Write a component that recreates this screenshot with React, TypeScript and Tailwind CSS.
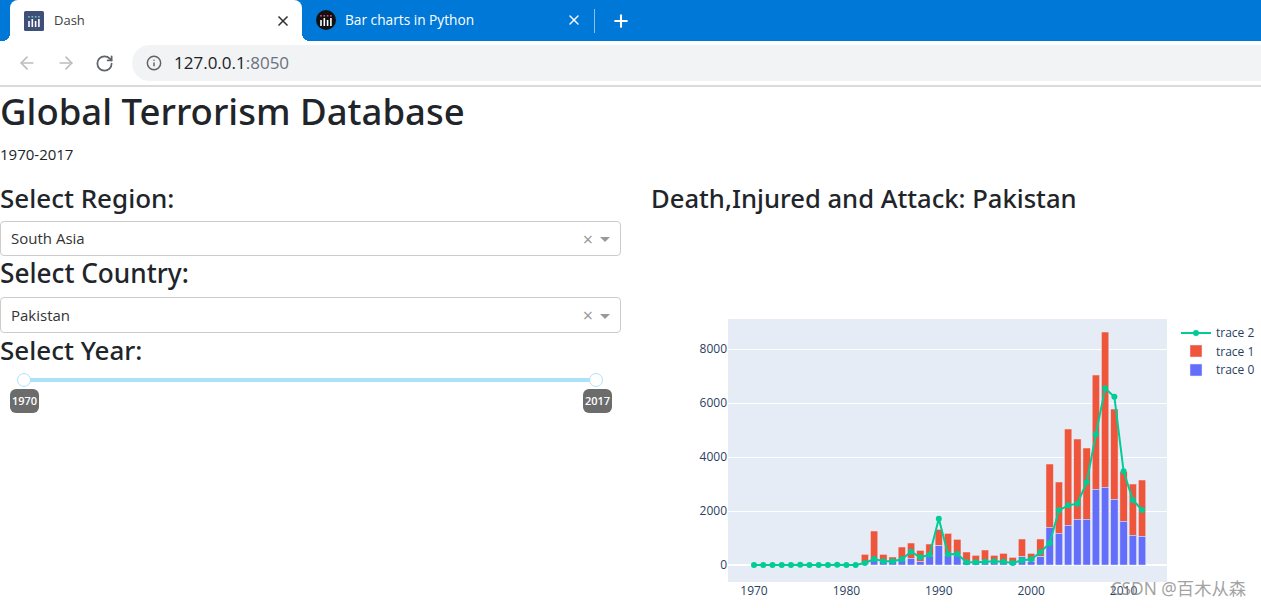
import { ArrowLeft, ArrowRight, Info, Plus, RotateCw, X } from "lucide-react";

const font = "font-['Open_Sans',sans-serif]";
const heading = "font-['Noto_Sans',sans-serif] font-medium";

// values read off the chart, in zoomed pixels (y = v / 3 + 320), starting at 1982
const totals = [703, 633, 703, 711, 681, 669, 691, 672, 628, 640, 658, 696, 706, 690, 706, 700, 712, 657, 700, 657, 432, 486, 327, 357, 384, 165, 36, 267, 455, 492, 480];
const blues = [733, 722, 725, 725, 720, 715, 724, 708, 677, 705, 705, 725, 725, 722, 725, 725, 727, 710, 724, 710, 622, 640, 616, 598, 598, 508, 502, 538, 604, 646, 649];
const line = [735, 735, 735, 735, 735, 734, 735, 735, 735, 734, 735, 735, 729, 717, 724, 724, 718, 695, 712, 704, 596, 703, 702, 727, 727, 725, 724, 725, 729, 721, 718, 697, 669, 571, 556, 551, 487, 343, 205, 230, 454, 540, 570];

const xOf = (year: number) => 754 + 9.24 * (year - 1970);
const yOf = (v: number) => v / 3 + 320;

function DashIcon({ round }: { round?: boolean }) {
  return (
    <svg width="20" height="20" viewBox="0 0 20 20" className="shrink-0">
      {round ? <circle cx="10" cy="10" r="10" fill="#111" /> : <rect width="20" height="20" rx="1.5" fill="#3f5078" />}
      {[5, 8.3, 11.6, 14.9].map((x, i) => (
        <g key={x}>
          <rect x={x - 0.8} y="5" width="1.6" height="1.6" fill={round ? "#e0457b" : "#6fc3b8"} />
          <rect x={x - 0.8} y={i % 2 ? 8 : 10} width="1.6" height={i % 2 ? 8 : 6} fill="#fff" />
        </g>
      ))}
    </svg>
  );
}

function Dropdown({ value, height }: { value: string; height: string }) {
  return (
    <div className={`flex items-center rounded border border-[#ccc] pl-[10px] pr-[10px] text-[#333] ${height}`}>
      <span className="flex-1 text-[15px]">{value}</span>
      <span className="mr-[7px] text-[18px] leading-none text-[#999]">×</span>
      <span className="mt-[2px] h-0 w-0 border-x-[5px] border-t-[5px] border-x-transparent border-t-[#999]" />
    </div>
  );
}

function Chart() {
  return (
    <svg width="610" height="383" viewBox="651 225 610 383" className={font} fontSize="12" fill="#2a3f5f">
      <rect x="728" y="319" width="439" height="263" fill="#e5ecf6" />
      {[349, 403, 457, 511].map((y) => (
        <line key={y} x1="728" x2="1167" y1={y + 0.5} y2={y + 0.5} stroke="#fff" />
      ))}
      <line x1="728" x2="1167" y1="565" y2="565" stroke="#fff" strokeWidth="2" />
      {[8000, 6000, 4000, 2000, 0].map((v) => (
        <text key={v} x="727" y={565 - v * 0.027 + 4} textAnchor="end">{v}</text>
      ))}
      {[1970, 1980, 1990, 2000, 2010].map((yr) => (
        <text key={yr} x={xOf(yr)} y="595" textAnchor="middle">{yr}</text>
      ))}
      {totals.map((t, i) => {
        const x = xOf(1982 + i) - 3.7;
        const top = yOf(blues[i]);
        return (
          <g key={i} stroke="#e5ecf6" strokeWidth="0.5">
            <rect x={x} y={yOf(t)} width="7.4" height={top - yOf(t)} fill="#ef553b" />
            <rect x={x} y={top} width="7.4" height={565 - top} fill="#636efa" />
          </g>
        );
      })}
      <polyline
        points={line.map((v, i) => `${xOf(1970 + i)},${yOf(v)}`).join(" ")}
        fill="none"
        stroke="#00cc96"
        strokeWidth="2"
      />
      {line.map((v, i) => (
        <circle key={i} cx={xOf(1970 + i)} cy={yOf(v)} r="3" fill="#00cc96" />
      ))}
      <line x1="1181" x2="1211" y1="333" y2="333" stroke="#00cc96" strokeWidth="2" />
      <circle cx="1196" cy="333" r="3" fill="#00cc96" />
      <rect x="1190" y="345" width="12" height="12" fill="#ef553b" stroke="#e5ecf6" strokeWidth="0.5" />
      <rect x="1190" y="364" width="12" height="12" fill="#636efa" stroke="#e5ecf6" strokeWidth="0.5" />
      <text x="1216" y="337">trace 2</text>
      <text x="1216" y="356">trace 1</text>
      <text x="1216" y="374">trace 0</text>
    </svg>
  );
}

export default function App() {
  return (
    <div className={`relative h-[608px] w-[1261px] overflow-hidden bg-white text-[#212529] ${font}`}>
      {/* browser tabs */}
      <div className="flex h-[41px] items-center bg-[#0078d7] pl-[10px] text-[13px]">
        <div className="relative flex h-full w-[292px] items-center rounded-t-lg bg-white pl-[14px] pr-[11px] text-[#3c4043]">
          <div className="absolute -left-2 bottom-0 h-2 w-2 bg-[radial-gradient(circle_at_0_0,#0078d7_8px,#fff_8px)]" />
          <div className="absolute -right-2 bottom-0 h-2 w-2 bg-[radial-gradient(circle_at_100%_0,#0078d7_8px,#fff_8px)]" />
          <DashIcon />
          <span className="ml-[10px] flex-1">Dash</span>
          <X size={16} strokeWidth={2.5} className="text-[#333]" />
        </div>
        <div className="ml-[14px] flex w-[278px] items-center pr-[12px] text-white">
          <DashIcon round />
          <span className="ml-[9px] flex-1 text-[13.7px]">Bar charts in Python</span>
          <X size={16} strokeWidth={2} />
        </div>
        <div className="h-[24px] w-px bg-[#8cc0ea]" />
        <Plus size={20} strokeWidth={2.5} className="ml-[16px] text-white" />
      </div>
      {/* toolbar */}
      <div className="flex h-[46px] items-center border-b-2 border-[#dadada]">
        <div className="flex w-[132px] items-center pl-[17px]">
          <ArrowLeft size={20} className="text-[#bdbdbd]" />
          <ArrowRight size={20} className="ml-[19px] text-[#bdbdbd]" />
          <RotateCw size={19} strokeWidth={2.2} className="ml-[19px] text-[#5f6368]" />
        </div>
        <div className="flex h-[36px] flex-1 items-center rounded-l-[18px] bg-[#f1f3f4] pl-[14px]">
          <Info size={16} strokeWidth={2.2} className="text-[#5f6368]" />
          <span className="ml-[12px] text-[17px] text-[#202124]">
            127.0.0.1<span className="text-[#6b7280]">:8050</span>
          </span>
        </div>
      </div>
      {/* page */}
      <h1 className={`text-[36.5px] leading-[48px] ${heading}`}>Global Terrorism Database</h1>
      <p className="mt-[7px] text-[15px] leading-6">1970-2017</p>
      <div className="mt-[16px] flex">
        <div className="w-[621px]">
          <h3 className={`text-[26px] leading-[33px] ${heading}`}>Select Region:</h3>
          <div className="mt-[6px]"><Dropdown value="South Asia" height="h-[35px]" /></div>
          <h3 className={`text-[26.2px] leading-[35px] ${heading}`}>Select Country:</h3>
          <div className="mt-[6px]"><Dropdown value="Pakistan" height="h-[36px]" /></div>
          <h3 className={`text-[26px] leading-[34px] ${heading}`}>Select Year:</h3>
          <div className="relative ml-[17px] mr-[18px] mt-[6px] flex h-[14px] items-center justify-between">
            <div className="absolute inset-x-[4px] h-[4px] bg-[#abe2fb]" />
            <div className="relative h-[14px] w-[14px] rounded-full border-[1.5px] border-[#abe2fb] bg-white" />
            <div className="relative h-[14px] w-[14px] rounded-full border-[1.5px] border-[#abe2fb] bg-white" />
          </div>
          <div className="mt-[2px] flex justify-between pl-[10px] pr-[9px]">
            <span className="flex h-[24px] w-[29px] items-center justify-center rounded-md bg-[#6c6c6c] text-[11px] font-semibold text-white">1970</span>
            <span className="flex h-[24px] w-[29px] items-center justify-center rounded-md bg-[#6c6c6c] text-[11px] font-semibold text-white">2017</span>
          </div>
        </div>
        <div className="ml-[30px] flex-1">
          <h3 className={`text-[25.6px] leading-[33px] ${heading}`}>Death,Injured and Attack: Pakistan</h3>
          <div className="mt-[10px]"><Chart /></div>
        </div>
      </div>
      <span className="absolute bottom-[6px] right-[15px] font-['Noto_Sans','Noto_Sans_CJK_SC',sans-serif] text-[17.3px] text-[#8a8a8a]/80">CSDN @百木从森</span>
    </div>
  );
}
